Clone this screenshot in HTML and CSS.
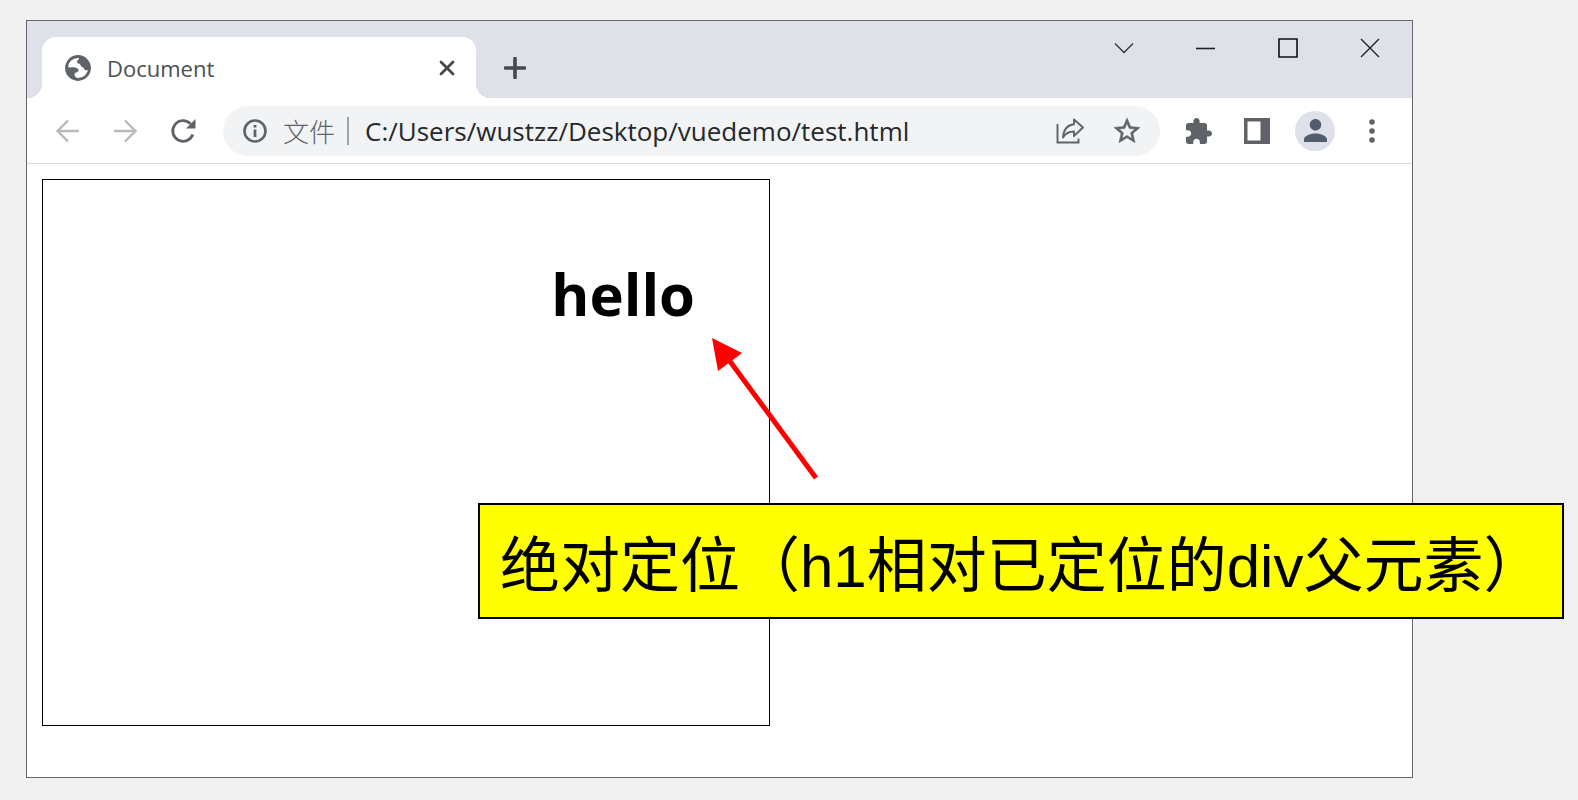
FILE: index.html
```html
<!DOCTYPE html>
<html lang="zh-CN">
<head>
<meta charset="utf-8">
<title>Document</title>
<link rel="stylesheet" href="styles.css">
</head>
<body>
<main class="stage">
  <section class="window">
    <header class="tabstrip">
      <div class="tab">
        <svg class="icon-globe" viewBox="0 0 26 26" aria-hidden="true"><circle cx="13" cy="13" r="11.5" fill="#fff" stroke="#5f6368" stroke-width="2.8"/><path d="M14.500 2C15 4 12 5 12 7C12 9 15 8 15.500 10C16 12.500 18.500 11.500 19 13.500C19.500 15.500 22 16 24.500 14A11.500 11.500 0 0 0 14.500 2Z" fill="#5f6368"/><path d="M1.500 11.500C4 13 7 12 10 12.500C13 13 14.500 15 13 16.500C11.500 18 9.500 17.500 9.500 19.500C9.500 21.500 11.500 22 11.500 24.200A11.500 11.500 0 0 1 1.500 11.500Z" fill="#5f6368"/></svg>
        <span class="tab-title">Document</span>
        <button class="bare tab-close" aria-label="关闭标签页"><svg width="16" height="16" viewBox="0 0 16 16"><path d="M2 2L14 14M14 2L2 14" stroke="#45494d" stroke-width="2.800" stroke-linecap="round"/></svg></button>
      </div>
      <button class="bare new-tab" aria-label="新标签页"><svg width="22" height="22" viewBox="0 0 22 22"><path d="M11 1.500V20.500M1.500 11H20.500" stroke="#45494d" stroke-width="3.600" stroke-linecap="round"/></svg></button>
      <div class="window-controls">
        <button class="bare" aria-label="搜索标签页"><svg width="20" height="20" viewBox="0 0 20 20"><path d="M1 5.500L10 14.500L19 5.500" fill="none" stroke="#333" stroke-width="1.300"/></svg></button>
        <button class="bare" aria-label="最小化"><svg width="20" height="20" viewBox="0 0 20 20"><path d="M0 10.500H19" stroke="#222" stroke-width="1.600"/></svg></button>
        <button class="bare" aria-label="最大化"><svg width="20" height="20" viewBox="0 0 20 20"><path d="M1 1H19V19H1Z" fill="none" stroke="#111" stroke-width="1.600"/></svg></button>
        <button class="bare" aria-label="关闭"><svg width="20" height="20" viewBox="0 0 20 20"><path d="M1 1L19 19M19 1L1 19" stroke="#222" stroke-width="1.400"/></svg></button>
      </div>
    </header>
    <nav class="toolbar">
      <button class="bare nav-button" aria-label="后退"><svg width="26" height="26" viewBox="0 0 26 26"><path d="M25 13H3.500M14 2.500L3.500 13L14 23.500" fill="none" stroke="#b8babd" stroke-width="2.400"/></svg></button>
      <button class="bare nav-button" aria-label="前进"><svg width="26" height="26" viewBox="0 0 26 26"><path d="M2 13H23.500M13 2.500L23.500 13L13 23.500" fill="none" stroke="#b8babd" stroke-width="2.400"/></svg></button>
      <button class="bare nav-button" aria-label="重新加载"><svg width="26" height="26" viewBox="0 0 26 26"><path d="M22.800 16.500A10.300 10.300 0 1 1 20.500 5.800" fill="none" stroke="#5f6368" stroke-width="2.800"/><path d="M25.500 1V10.500H16Z" fill="#5f6368"/></svg></button>
      <div class="omnibox">
        <svg width="24" height="24" viewBox="0 0 24 24" aria-hidden="true"><circle cx="12" cy="12" r="10.500" fill="none" stroke="#5f6368" stroke-width="2.600"/><path d="M12 10.500V18M12 6V8.500" stroke="#5f6368" stroke-width="2.800"/></svg>
        <label class="scheme" for="address">文件</label>
        <span class="divider"></span>
        <input class="address" id="address" type="text" value="C:/Users/wustzz/Desktop/vuedemo/test.html">
        <button class="bare" aria-label="分享"><svg width="28" height="26" viewBox="0 0 28 26"><path d="M1.500 6V24.500H22.500V20.500" fill="none" stroke="#5f6368" stroke-width="1.900"/><path d="M18 1.500L27 9.500L18 18V13.500C13 13.500 9.500 15 7 19.500C7.500 12 11 7 18 6.200Z" fill="none" stroke="#5f6368" stroke-width="1.900" stroke-linejoin="round"/></svg></button>
        <button class="bare" aria-label="加入书签"><svg width="26" height="26" viewBox="2 2 20 20"><path d="M22 9.240l-7.190-.62L12 2 9.190 8.630 2 9.240l5.460 4.730L5.820 21 12 17.270 18.180 21l-1.630-7.030L22 9.240zM12 15.400l-3.760 2.270 1-4.280-3.320-2.880 4.380-.38L12 6.100l1.710 4.040 4.380.38-3.320 2.880 1 4.280L12 15.400z" fill="#5f6368" stroke="#5f6368" stroke-width=".4"/></svg></button>
      </div>
      <button class="bare" aria-label="扩展程序"><svg width="26" height="26" viewBox="2 1 21 21"><path d="M20.500 11H19V7c0-1.100-.9-2-2-2h-4V3.500C13 2.120 11.880 1 10.500 1S8 2.120 8 3.500V5H4c-1.100 0-1.990.9-1.990 2v3.800H3.500c1.490 0 2.700 1.210 2.700 2.700s-1.210 2.700-2.700 2.700H2V20c0 1.100.9 2 2 2h3.800v-1.500c0-1.490 1.210-2.700 2.700-2.700 1.490 0 2.700 1.210 2.700 2.700V22H17c1.100 0 2-.9 2-2v-4h1.500c1.380 0 2.500-1.120 2.500-2.500S21.880 11 20.500 11z" fill="#5f6368"/></svg></button>
      <button class="bare" aria-label="侧边栏"><svg width="26" height="26" viewBox="0 0 26 26"><path d="M0 0H26V26H0ZM3.500 3.500V22.500H16.500V3.500Z" fill="#5f6368" fill-rule="evenodd"/></svg></button>
      <button class="bare avatar" aria-label="个人资料"><svg width="23" height="23" viewBox="4 4 16 16"><path d="M12 12c2.210 0 4-1.790 4-4s-1.790-4-4-4-4 1.790-4 4 1.790 4 4 4zm0 2c-2.670 0-8 1.340-8 4v2h16v-2c0-2.660-5.330-4-8-4z" fill="#535c6d"/></svg></button>
      <button class="bare menu" aria-label="菜单"><svg width="6" height="24" viewBox="0 0 6 24"><g fill="#5f6368"><circle cx="3" cy="3" r="2.800"/><circle cx="3" cy="12" r="2.800"/><circle cx="3" cy="21" r="2.800"/></g></svg></button>
    </nav>
    <article class="page">
      <div class="box"><h1 class="greeting">hello</h1></div>
    </article>
  </section>
  <svg class="arrow" viewBox="0 0 106 142" aria-hidden="true"><path d="M17 22L104 140" stroke="#f00" stroke-width="5"/><path d="M0 0L30 15L6 33Z" fill="#f00"/></svg>
  <p class="callout">绝对定位（h1相对已定位的div父元素）</p>
</main>
</body>
</html>
```
FILE: styles.css
```css
* { box-sizing: border-box; }

body {
  margin: 0;
  background: #f1f1f1;
  font-family: "Open Sans", "Noto Sans CJK SC", sans-serif;
}

.stage {
  position: relative;
  padding: 20px 165px 22px 26px;
}

.window {
  border: 1px solid #666;
  background: #fff;
}

.bare {
  display: flex;
  flex: none;
  align-items: center;
  justify-content: center;
  padding: 0;
  border: 0;
  background: none;
}

.tabstrip {
  display: flex;
  align-items: flex-end;
  height: 77px;
  background: #dee1e7;
}

.tab {
  position: relative;
  display: flex;
  align-items: center;
  gap: 16px;
  width: 434px;
  height: 61px;
  margin-left: 15px;
  padding: 0 21px 0 23px;
  border-radius: 14px 14px 0 0;
  background: #fff;
}

.tab::before,
.tab::after {
  content: "";
  position: absolute;
  bottom: 0;
  width: 14px;
  height: 14px;
}

.tab::before {
  right: 100%;
  background: radial-gradient(circle at 0 0, #dee1e7 14px, #fff 14px);
}

.tab::after {
  left: 100%;
  background: radial-gradient(circle at 100% 0, #dee1e7 14px, #fff 14px);
}

.icon-globe {
  width: 26px;
  height: 26px;
}

.tab-title {
  flex: 1;
  color: #4b4f54;
  font-size: 22px;
}

.new-tab {
  height: 61px;
  margin-left: 28px;
}

.window-controls {
  display: flex;
  gap: 62px;
  align-self: flex-start;
  margin-left: auto;
  padding: 17px 32px 0 0;
}

.toolbar {
  display: flex;
  align-items: center;
  gap: 32px;
  height: 66px;
  padding: 0 37px 0 27px;
  border-bottom: 1px solid #dcdcdc;
}

.omnibox {
  display: flex;
  flex: 1;
  align-items: center;
  gap: 16px;
  height: 50px;
  margin: 0 -6px 0 -5px;
  padding: 0 20px;
  border-radius: 25px;
  background: #f1f3f4;
}

.omnibox .bare + .bare {
  margin-left: 14px;
}

.scheme {
  color: #5f6368;
  font-family: "Noto Sans CJK SC", sans-serif;
  font-size: 26px;
  font-weight: 300;
}

.divider {
  width: 2px;
  height: 28px;
  margin-left: -4px;
  background: #a0a3a7;
}

.address {
  flex: 1;
  min-width: 0;
  padding: 0;
  border: 0;
  outline: 0;
  background: none;
  color: #25282c;
  font-family: "Open Sans", sans-serif;
  font-size: 26px;
}

.avatar {
  width: 40px;
  height: 40px;
  margin: 0 2px 0 -7px;
  border-radius: 50%;
  background: #dee1e9;
}

.page {
  padding: 15px 15px 51px;
}

.box {
  width: 728px;
  height: 547px;
  padding: 74px 74px 0 0;
  border: 1px solid #000;
}

.greeting {
  margin: 0;
  color: #000;
  font-size: 58px;
  font-weight: 700;
  line-height: 80px;
  text-align: right;
}

.arrow {
  position: absolute;
  top: 338px;
  left: 712px;
  width: 106px;
  height: 142px;
}

.callout {
  position: absolute;
  top: 503px;
  right: 14px;
  left: 478px;
  margin: 0;
  padding: 24px 20px 12px;
  border: 2px solid #000;
  background: #ff0;
  color: #000;
  font-family: "Liberation Sans", "Noto Sans CJK SC", sans-serif;
  font-size: 60px;
  line-height: 76px;
  white-space: nowrap;
}
```
